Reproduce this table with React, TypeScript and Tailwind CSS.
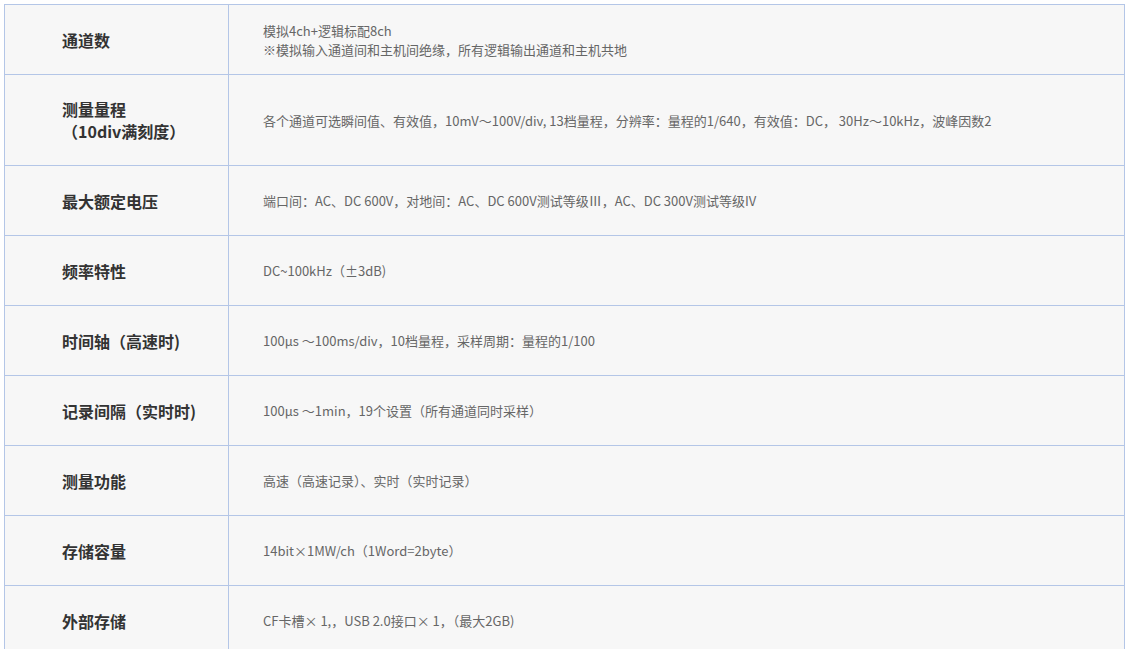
import React from "react";

const rows: { label: React.ReactNode; value: React.ReactNode; tall?: boolean }[] = [
  {
    label: "通道数",
    value: (
      <>
        <div>模拟4ch+逻辑标配8ch</div>
        <div>※模拟输入通道间和主机间绝缘，所有逻辑输出通道和主机共地</div>
      </>
    ),
  },
  {
    label: (
      <>
        <div>测量量程</div>
        <div>（10div满刻度）</div>
      </>
    ),
    value: "各个通道可选瞬间值、有效值，10mV～100V/div, 13档量程，分辨率：量程的1/640，有效值：DC， 30Hz～10kHz，波峰因数2",
    tall: true,
  },
  { label: "最大额定电压", value: "端口间：AC、DC 600V，对地间：AC、DC 600V测试等级Ⅲ，AC、DC 300V测试等级IV" },
  { label: "频率特性", value: "DC~100kHz（±3dB)" },
  { label: "时间轴（高速时)", value: "100μs ～100ms/div，10档量程，采样周期：量程的1/100" },
  { label: "记录间隔（实时时)", value: "100μs ～1min，19个设置（所有通道同时采样）" },
  { label: "测量功能", value: "高速（高速记录）、实时（实时记录）" },
  { label: "存储容量", value: "14bit×1MW/ch（1Word=2byte）" },
  { label: "外部存储", value: "CF卡槽× 1,，USB 2.0接口× 1，（最大2GB)" },
];

export default function App() {
  return (
    <div
      className="w-[1127px] h-[649px] overflow-hidden bg-white pt-[4px] pl-[4px]"
      style={{ fontFamily: '"Microsoft YaHei", "Noto Sans CJK SC", "Noto Sans", sans-serif' }}
    >
      <div className="w-[1121px] border-l border-r border-t border-[#b4c6e7] bg-[#f7f7f7]">
        {rows.map((r, i) => (
          <div
            key={i}
            className={`flex border-b border-[#b4c6e7] ${r.tall ? "h-[91px]" : "h-[70px]"}`}
          >
            <div className="w-[224px] shrink-0 border-r border-[#b4c6e7] flex flex-col justify-center pl-[57px] text-[16px] leading-[22px] font-bold text-[#333333]">
              {r.label}
            </div>
            <div className="flex-1 flex flex-col justify-center pl-[34px] text-[13px] leading-[19px] text-[#666666]">
              {r.value}
            </div>
          </div>
        ))}
      </div>
    </div>
  );
}
